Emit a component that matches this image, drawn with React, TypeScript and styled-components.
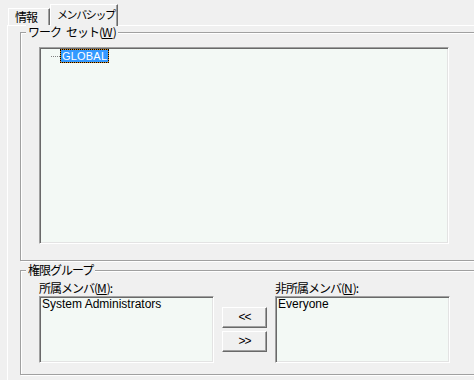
import React from 'react';
import styled, { createGlobalStyle } from 'styled-components';

const GlobalStyle = createGlobalStyle`
    html, body {
        margin: 0;
        padding: 0;
        background: #f0f0f0;
        overflow: hidden;
    }
    body {
        font-family: "Liberation Sans", "Noto Sans CJK JP", sans-serif;
        font-size: 12px;
        color: #000;
    }
`;

const Page = styled.div`
    width: 474px;
    height: 380px;
    overflow: hidden;
    box-sizing: border-box;
    padding: 4px 0 0 7px;
`;

const TabStrip = styled.div`
    display: flex;
    align-items: flex-end;
    height: 21px;
    padding-left: 1px;
    position: relative;
    z-index: 1;
`;

const Tab = styled.div<{ $active?: boolean; $width: number }>`
    box-sizing: border-box;
    width: ${p => p.$width}px;
    height: ${p => (p.$active ? 22 : 17)}px;
    margin-bottom: ${p => (p.$active ? -1 : 0)}px;
    padding: ${p => (p.$active ? '2px 0 0 6px' : '1px 0 0 6px')};
    background: #f0f0f0;
    border-top: 1px solid #fff;
    border-left: 1px solid #fff;
    border-right: 1px solid #696969;
    box-shadow: inset -1px 0 #a0a0a0;
    font-family: "Noto Sans CJK JP", sans-serif;
    font-size: ${p => (p.$active ? 11 : 12)}px;
    line-height: 14px;
    letter-spacing: ${p => (p.$active ? -1.4 : -1)}px;
    white-space: nowrap;
    overflow: hidden;
`;

const Panel = styled.div`
    box-sizing: border-box;
    width: 520px;
    height: 400px;
    border-top: 1px solid #fff;
    border-left: 1px solid #fff;
    padding: 6px 0 0 12px;
`;

const GroupBox = styled.div<{ $height: number; $gap?: number }>`
    position: relative;
    box-sizing: border-box;
    width: 470px;
    height: ${p => p.$height}px;
    margin-top: ${p => p.$gap ?? 0}px;
    border: 1px solid #a0a0a0;
    box-shadow: inset 1px 1px #fff, 1px 1px #fff;
`;

const Legend = styled.span`
    position: absolute;
    top: -8px;
    left: 5px;
    padding: 0 2px;
    background: #f0f0f0;
    font-family: "Noto Sans CJK JP", sans-serif;
    line-height: 14px;
    letter-spacing: -1px;
    white-space: nowrap;
`;

const WordGap = styled.span`
    display: inline-block;
    width: 5px;
`;

const Mnemonic = styled.span`
    text-decoration: underline;
    letter-spacing: 0;
`;

const Sunken = styled.div<{ $width: number; $height: number }>`
    box-sizing: border-box;
    width: ${p => p.$width}px;
    height: ${p => p.$height}px;
    background: #f3f9f5;
    border: 1px solid;
    border-color: #a0a0a0 #fff #fff #a0a0a0;
    box-shadow: inset 1px 1px #696969, inset -1px -1px #e3e3e3;
    padding: 1px;
`;

const WorkSetBody = styled.div`
    padding: 14px 0 0 18px;
`;

const TreeRow = styled.div`
    display: flex;
    align-items: center;
    height: 14px;
`;

const TreeConnector = styled.span`
    width: 9px;
    margin-left: 10px;
    border-top: 1px dotted #808080;
`;

const TreeLabel = styled.span`
    box-sizing: border-box;
    height: 14px;
    padding: 0 1px;
    border: 1px dotted #000;
    background: linear-gradient(#3399ff, #3399ff) padding-box, #d98a1a border-box;
    color: #fff;
    font-size: 11px;
    line-height: 12px;
    letter-spacing: 0.2px;
`;

const MembersBody = styled.div`
    display: grid;
    grid-template-columns: 175px 45px 175px;
    grid-template-rows: 15px auto;
    column-gap: 8px;
    padding: 10px 0 0 18px;
`;

const FieldLabel = styled.div`
    font-family: "Noto Sans CJK JP", sans-serif;
    line-height: 14px;
    letter-spacing: -1px;
    white-space: nowrap;
`;

const ButtonColumn = styled.div`
    grid-row: 2;
    grid-column: 2;
    display: flex;
    flex-direction: column;
    gap: 3px;
    padding-top: 11px;
`;

const ArrowButton = styled.button`
    box-sizing: border-box;
    width: 45px;
    height: 21px;
    margin: 0;
    padding: 0 0 1px;
    background: #f0f0f0;
    border: 1px solid;
    border-color: #fff #696969 #696969 #fff;
    box-shadow: inset -1px -1px #a0a0a0;
    font: 12px "Liberation Sans", sans-serif;
    color: #000;
    letter-spacing: -1px;
`;

const ListItem = styled.div`
    padding: 0 1px;
    line-height: 13px;
    white-space: nowrap;
`;

const App: React.FC = () => {
    return (
        <>
            <GlobalStyle />
            <Page>
                <TabStrip>
                    <Tab $width={42}>情報</Tab>
                    <Tab $width={68} $active>メンバシップ</Tab>
                </TabStrip>
                <Panel>
                    <GroupBox $height={229}>
                        <Legend>
                            ワーク<WordGap />セット(<Mnemonic>W</Mnemonic>)
                        </Legend>
                        <WorkSetBody>
                            <Sunken $width={410} $height={197}>
                                <TreeRow>
                                    <TreeConnector />
                                    <TreeLabel>GLOBAL</TreeLabel>
                                </TreeRow>
                            </Sunken>
                        </WorkSetBody>
                    </GroupBox>
                    <GroupBox $height={105} $gap={9}>
                        <Legend>権限グループ</Legend>
                        <MembersBody>
                            <FieldLabel>
                                所属メンバ(<Mnemonic>M</Mnemonic>):
                            </FieldLabel>
                            <div />
                            <FieldLabel>
                                非所属メンバ(<Mnemonic>N</Mnemonic>):
                            </FieldLabel>
                            <Sunken $width={175} $height={67}>
                                <ListItem>System Administrators</ListItem>
                            </Sunken>
                            <ButtonColumn>
                                <ArrowButton>&lt;&lt;</ArrowButton>
                                <ArrowButton>&gt;&gt;</ArrowButton>
                            </ButtonColumn>
                            <Sunken $width={175} $height={67}>
                                <ListItem>Everyone</ListItem>
                            </Sunken>
                        </MembersBody>
                    </GroupBox>
                </Panel>
            </Page>
        </>
    );
};

export default App;
